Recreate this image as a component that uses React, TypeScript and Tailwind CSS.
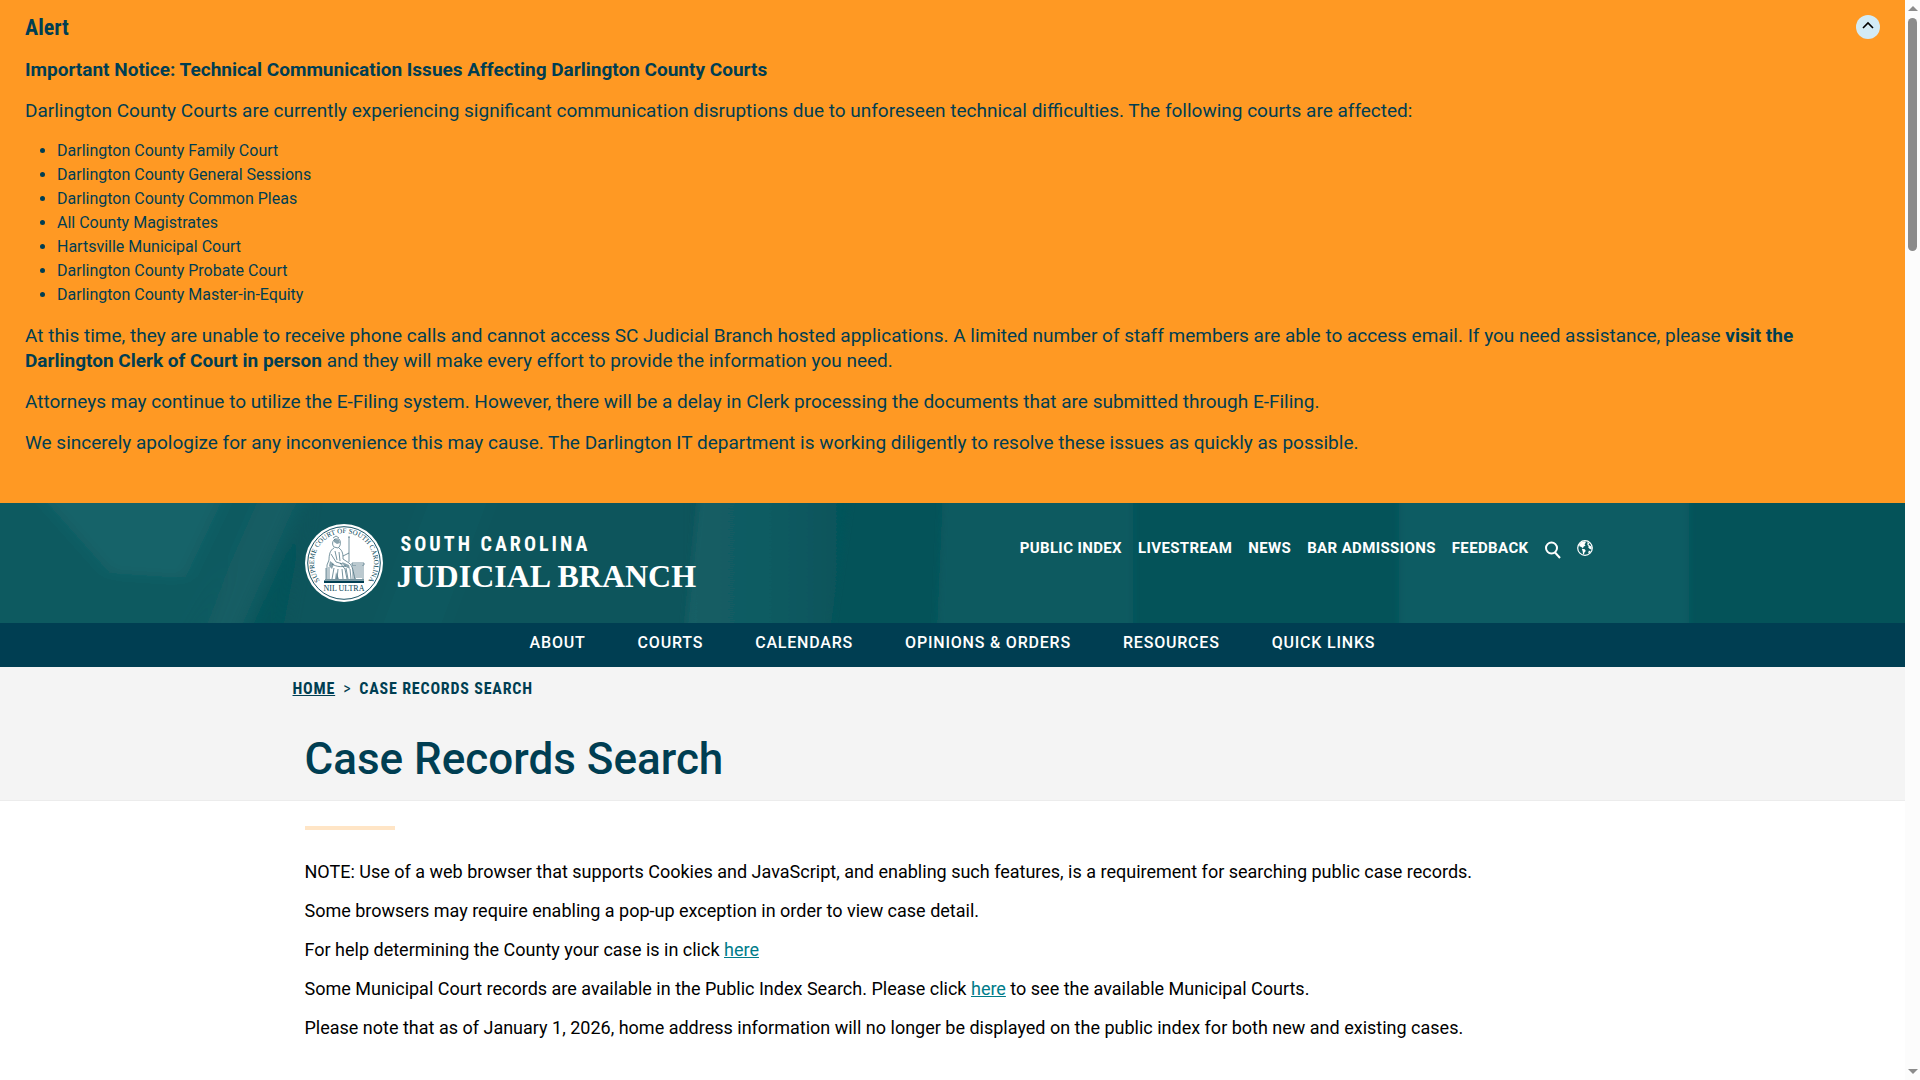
import { ComponentProps } from "react";
import { twMerge } from "tailwind-merge";

const affectedCourts = [
    "Darlington County Family Court",
    "Darlington County General Sessions",
    "Darlington County Common Pleas",
    "All County Magistrates",
    "Hartsville Municipal Court",
    "Darlington County Probate Court",
    "Darlington County Master-in-Equity",
];

const utilityLinks = [
    "Public Index",
    "Livestream",
    "News",
    "Bar Admissions",
    "Feedback",
];

const mainLinks = [
    "About",
    "Courts",
    "Calendars",
    "Opinions & Orders",
    "Resources",
    "Quick Links",
];

const Container = ({ className, ...props }: ComponentProps<"div">) => (
    <div
        className={twMerge("mx-auto w-full max-w-[1320px] px-3", className)}
        {...props}
    />
);

const Alert = () => (
    <section
        aria-labelledby="alert-title"
        className="flex flex-col gap-4 bg-[#ff9923] px-[25px] pt-[15px] pb-12 text-[19px] leading-[25px] text-[#003e52]"
    >
        <div className="flex h-[26px] items-start justify-between">
            <h2
                id="alert-title"
                className="font-['Roboto_Condensed','Roboto',sans-serif] text-[22px] leading-[26px] font-bold"
            >
                Alert
            </h2>
            <button
                type="button"
                aria-label="Collapse alert"
                className="flex size-6 items-center justify-center rounded-full bg-[#d3ebf5] text-black"
            >
                <svg
                    viewBox="0 0 12 8"
                    className="mb-1 h-2 w-3"
                    fill="none"
                    stroke="currentColor"
                    strokeWidth="1.600"
                >
                    <path d="M1 7 6 2l5 5" />
                </svg>
            </button>
        </div>
        <p className="font-bold">
            Important Notice: Technical Communication Issues Affecting
            Darlington County Courts
        </p>
        <p>
            Darlington County Courts are currently experiencing significant
            communication disruptions due to unforeseen technical difficulties.
            The following courts are affected:
        </p>
        <ul className="list-disc pl-8 text-base">
            {affectedCourts.map((court) => (
                <li key={court}>{court}</li>
            ))}
        </ul>
        <p>
            At this time, they are unable to receive phone calls and cannot
            access SC Judicial Branch hosted applications. A limited number of
            staff members are able to access email. If you need assistance,
            please{" "}
            <strong>visit the Darlington Clerk of Court in person</strong> and
            they will make every effort to provide the information you need.
        </p>
        <p>
            Attorneys may continue to utilize the E-Filing system. However,
            there will be a delay in Clerk processing the documents that are
            submitted through E-Filing.
        </p>
        <p>
            We sincerely apologize for any inconvenience this may cause. The
            Darlington IT department is working diligently to resolve these
            issues as quickly as possible.
        </p>
    </section>
);

const Seal = () => (
    <svg viewBox="0 0 78 78" className="size-[78px] shrink-0" aria-hidden="true">
        <circle cx="39" cy="39" r="39" fill="#fff" />
        <circle
            cx="39"
            cy="39"
            r="36.300"
            fill="none"
            stroke="#003e52"
            strokeWidth="0.9"
        />
        <path
            id="seal-ring"
            d="M18 60.500A30 30 0 1 1 60 60.500"
            fill="none"
        />
        <text
            fill="#003e52"
            fontSize="7"
            fontFamily="Liberation Serif, serif"
        >
            <textPath href="#seal-ring" startOffset="50%" textAnchor="middle">
                SUPREME COURT OF SOUTH CAROLINA
            </textPath>
        </text>
        <text
            x="39"
            y="67"
            fill="#003e52"
            fontSize="8"
            textAnchor="middle"
            fontFamily="Liberation Serif, serif"
        >
            NIL ULTRA
        </text>
        <path d="M19 56.500h40v2.500H19z" fill="#003e52" />
        <g fill="none" stroke="#3c6576" strokeWidth="0.7">
            {/* seated figure with staff */}
            <path d="M30 15c-3 2-3 6-1 8l4 1c3-2 3-7 1-9zM28 14l3-2 3 2M29 24c-4 2-5 7-5 12l-2 5v14M34 24c4 3 4 7 4 11l6 4c4 3 4 9 6 16M26 30l5 8 7 2M30 27l2 9M34 28l1 9M27 40c5 3 9 3 14 2M29 44l-2 11M33 45l-1 10M37 45l1 10M41 44l2 11M45 45l1 10M38 32l6-3M44 13v25M43 13h2M24 43v12M35 39l5 6 2 10" />
            {/* altar */}
            <path d="M47 39h12v2H47zM48 41v14M50 41v14M52 42v12M54 42v12M56 42v12M58 41v14M20 55.500h39M21 44v11" />
        </g>
        <path
            d="M29 15l5 1 1 3-3 1-3-2zM25 37l4 3-2 5-3-3zM37 38l7 3 1 4-6-3zM31 48l3 7h-4z"
            fill="#3c6576"
            opacity="0.6"
        />
    </svg>
);

const HeaderBackdrop = () => (
    <svg
        className="absolute inset-0 size-full"
        viewBox="0 0 1905 120"
        preserveAspectRatio="none"
        aria-hidden="true"
    >
        <defs>
            <linearGradient id="fade-right">
                <stop offset="0" stopColor="#135e65" />
                <stop offset="0.6" stopColor="#105a61" />
                <stop offset="1" stopColor="#045359" />
            </linearGradient>
            <filter id="soften" x="-5%" width="110%">
                <feGaussianBlur stdDeviation="9 6" />
            </filter>
            <filter id="edge" x="-5%" width="110%">
                <feGaussianBlur stdDeviation="3 0" />
            </filter>
        </defs>
        <rect width="1905" height="120" fill="#045359" />
        <g filter="url(#soften)">
            <path d="M-40-20H270L190 140H-40z" fill="#0f5a61" />
            <path d="M30-20H230L185 75 110 70z" fill="#176369" />
            <path d="M265-20h45L240 140h-45z" fill="#125d64" />
            <path d="M310-20h390v160H280z" fill="#08555b" />
            <path d="M430-20h70L440 140h-70z" fill="#0c585e" />
        </g>
        <g filter="url(#edge)">
            <path d="M699-10H850L830 130H685z" fill="url(#fade-right)" />
            <path d="M943-10h190v140H937z" fill="#0f5a61" />
            <path d="M1399-10h290v140H1399z" fill="#115c63" />
        </g>
    </svg>
);

const Header = () => (
    <header className="text-white">
        <div className="relative">
            <HeaderBackdrop />
            <Container className="relative flex h-[120px] items-start justify-between pt-[21px]">
                <a href="#" className="flex gap-[14px]">
                    <Seal />
                    <span className="flex flex-col pt-2 whitespace-nowrap">
                        <span className="pl-1 font-['Roboto_Condensed','Roboto',sans-serif] text-[20px] leading-6 font-bold tracking-[3px]">
                            SOUTH CAROLINA
                        </span>
                        <span className="font-['Liberation_Serif',serif] text-[32px] leading-10 font-bold">
                            JUDICIAL BRANCH
                        </span>
                    </span>
                </a>
                <nav
                    aria-label="Utility"
                    className="flex items-center gap-4 pt-3 pr-2 text-[15px] leading-6 font-bold tracking-wide uppercase"
                >
                    {utilityLinks.map((label) => (
                        <a key={label} href="#">
                            {label}
                        </a>
                    ))}
                    <button type="button" aria-label="Search">
                        <svg
                            viewBox="0 0 16 18"
                            className="mt-1 h-[18px] w-4"
                            fill="none"
                            stroke="currentColor"
                            strokeWidth="2"
                        >
                            <circle cx="6.500" cy="7" r="5.500" />
                            <path d="m10 11.500 5 5.500" />
                        </svg>
                    </button>
                    <button type="button" aria-label="Language">
                        <svg viewBox="0 0 16 16" className="size-4">
                            <circle
                                cx="8"
                                cy="8"
                                r="7.300"
                                fill="none"
                                stroke="currentColor"
                                strokeWidth="1.200"
                            />
                            <path
                                d="M2 4.500 4.500 2l3.800-.8.5 1.600-1.300 1.400 1 1.300-2 1.300-.5 1.500L4.300 7 2.500 6.200zM4.800 8.800l3 .4 1 1.800-1.400 1.600-.4 2-1-.5-.3-2.600zM10.500 2l2 1.200-1 1.500L13 5.500l1.600 1.300.2 2.700-2-.5-1.500-1.500.3-1.500-1.200-1zM11.800 10.800l2 .2-1.600 2.400-1-.6z"
                                fill="currentColor"
                            />
                        </svg>
                    </button>
                </nav>
            </Container>
        </div>
        <nav
            aria-label="Main"
            className="flex h-11 justify-center gap-[52px] bg-[#003e52] pt-2 text-base font-medium tracking-wider uppercase"
        >
            {mainLinks.map((label) => (
                <a key={label} href="#">
                    {label}
                </a>
            ))}
        </nav>
    </header>
);

const PageTitle = () => (
    <div className="border-b border-[#ececec] bg-[#f4f4f4] text-[#003e52]">
        <Container className="pb-[14px]">
            <nav
                aria-label="Breadcrumb"
                className="-ml-3 flex gap-2 pt-[10px] font-['Roboto_Condensed','Roboto',sans-serif] text-base leading-6 font-bold tracking-wider uppercase"
            >
                <a href="#" className="underline">
                    Home
                </a>
                <span className="font-normal">&gt;</span>
                <span aria-current="page">Case Records Search</span>
            </nav>
            <h1 className="pt-[31px] text-[44px] leading-[54px] font-medium">
                Case Records Search
            </h1>
        </Container>
    </div>
);

const InlineLink = (props: ComponentProps<"a">) => (
    <a href="#" className="text-[#007c8a] underline" {...props} />
);

const Content = () => (
    <Container className="flex flex-col gap-4 pt-[25px] text-[18px] leading-[23px] text-black">
        <div className="mb-[14px] h-1 w-[90px] bg-[#ffe5c6]" />
        <p>
            NOTE: Use of a web browser that supports Cookies and JavaScript, and
            enabling such features, is a requirement for searching public case
            records.
        </p>
        <p>
            Some browsers may require enabling a pop-up exception in order to
            view case detail.
        </p>
        <p>
            For help determining the County your case is in click{" "}
            <InlineLink>here</InlineLink>
        </p>
        <p>
            Some Municipal Court records are available in the Public Index
            Search. Please click <InlineLink>here</InlineLink> to see the
            available Municipal Courts.
        </p>
        <p>
            Please note that as of January 1, 2026, home address information
            will no longer be displayed on the public index for both new and
            existing cases.
        </p>
    </Container>
);

const ScrollRail = () => (
    <div
        aria-hidden="true"
        className="sticky top-0 flex h-screen w-[15px] shrink-0 flex-col items-center bg-[#fcfcfc] py-[6px]"
    >
        <svg viewBox="0 0 10 5" className="h-[5px] w-[10px] fill-[#8b8b8b]">
            <path d="M0 5 5 0l5 5z" />
        </svg>
        <div className="mt-[7px] h-[233px] w-[9px] rounded-full bg-[#8b8b8b]" />
        <svg
            viewBox="0 0 10 5"
            className="mt-auto h-[5px] w-[10px] fill-[#8b8b8b]"
        >
            <path d="M0 0h10L5 5z" />
        </svg>
    </div>
);

export default function App() {
    return (
        <div className="flex min-h-screen bg-white font-['Roboto',sans-serif]">
            <div className="min-w-0 flex-1">
                <Alert />
                <Header />
                <main>
                    <PageTitle />
                    <Content />
                </main>
            </div>
            <ScrollRail />
        </div>
    );
}
